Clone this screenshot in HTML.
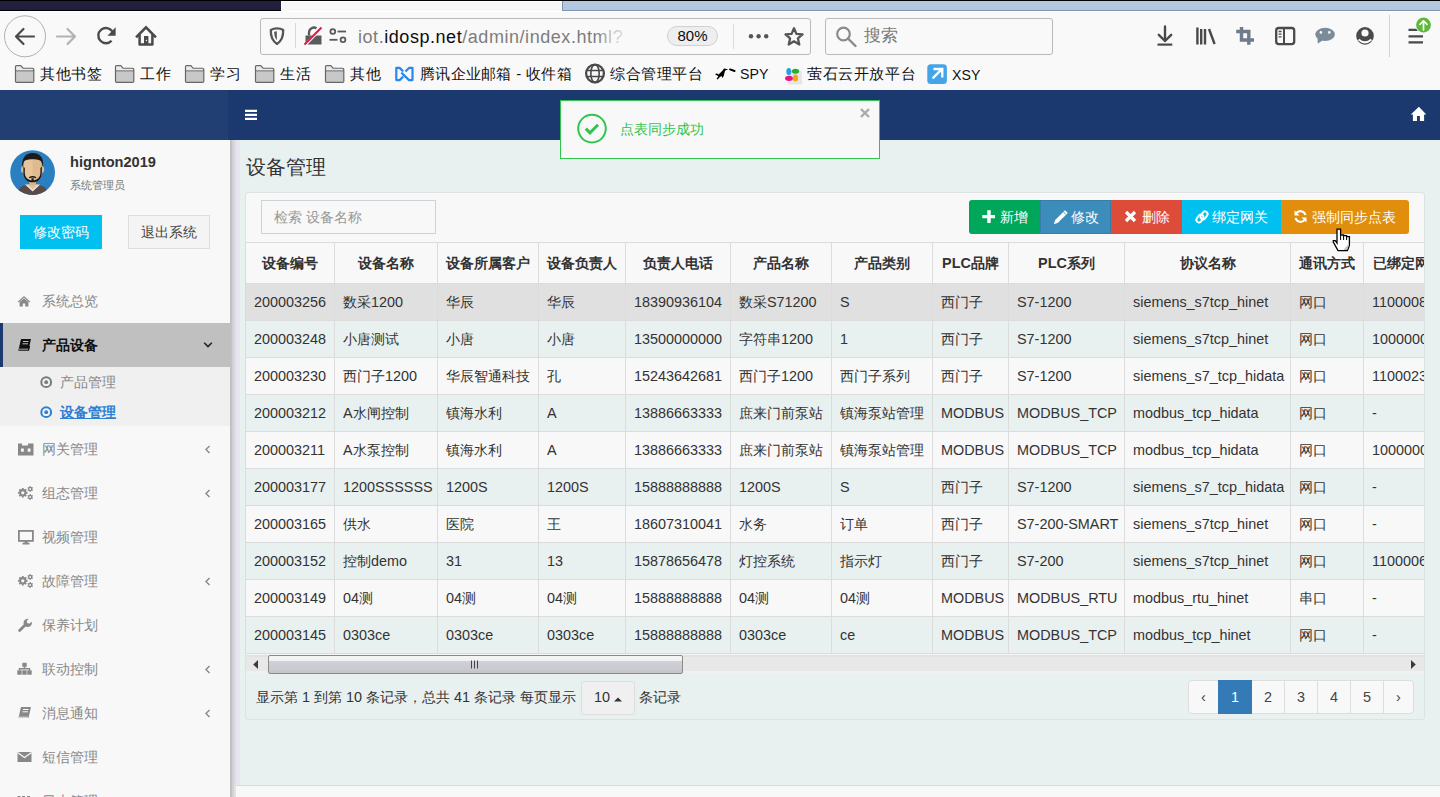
<!DOCTYPE html>
<html><head><meta charset="utf-8">
<style>
*{box-sizing:border-box;margin:0;padding:0}
html,body{width:1440px;height:797px;overflow:hidden;background:#f9f9f9;font-family:"Liberation Sans",sans-serif;color:#333}
.abs{position:absolute}
svg{display:block}
/* top strip */
#strip{left:0;top:0;width:1440px;height:11px;background:#000}
#tab1{left:0;top:1px;width:281px;height:9px;background:#201f40}
#tab2{left:281px;top:1px;width:281px;height:10px;background:#f7f7f7;border-top:1px solid #fff;border-left:1px solid #fff}
#tab3{left:562px;top:1px;width:878px;height:10px;background:#b3c8e0;border-left:1px solid #7f93ab;border-bottom:1px solid #7f93ab}
#nav{left:0;top:11px;width:1440px;height:79px;background:#f9f9f9;border-top:1px solid #fff}
#urlbar{left:260px;top:18px;width:551px;height:37px;border:1px solid #b9b9b9;border-radius:3px;background:#f9f9f9}
#search{left:825px;top:18px;width:228px;height:37px;border:1px solid #b9b9b9;border-radius:3px;background:#f9f9f9}
.bm{position:absolute;top:64px;font-size:15px;letter-spacing:0.6px;color:#111;white-space:nowrap;line-height:20px}
/* app */
#hdr{left:0;top:90px;width:1440px;height:50px;background:#1b396e}
#logo{left:0;top:90px;width:228px;height:50px;background:#223f73}
#side{left:0;top:140px;width:230px;height:657px;background:#f8f8f8}
#shadow{left:230px;top:140px;width:10px;height:645px;background:linear-gradient(90deg,#bdbdbd 0,#c6c6c6 2px,#d2d2d6 2px,#d2d2d6 4px,#dcdce4 4px,#dcdce4 6px,#e4e4ee 6px,#e6e8ee 10px)}
#shadow2{left:230px;top:785px;width:6px;height:12px;background:linear-gradient(90deg,#bdbdbd 0,#c6c6c6 2px,#d0d0d0 2px,#d4d4d4 4px,#e0e0e0 4px,#e4e4e4 6px)}
#content{left:240px;top:140px;width:1200px;height:645px;background:#e8f0f0}
#footer{left:236px;top:785px;width:1204px;height:12px;background:#f8f8f8;border-top:1px solid #d6dadd}
.menu{position:absolute;left:0;width:230px;height:44px;font-size:14.4px;color:#888;line-height:44px}
.menu .t{position:absolute;left:42px;top:0}
.menu .ic{position:absolute;left:17px;top:15px}
.menu .ch{position:absolute;left:203px;top:17px}
#panel{left:245px;top:192px;width:1180px;height:528px;background:transparent;border:1px solid #dde3e3;border-radius:3px}
#panelTop{left:246px;top:193px;width:1178px;height:49px;background:#f8f8f8;border-radius:3px 3px 0 0}
table{border-collapse:collapse;font-size:14.4px;white-space:nowrap;table-layout:fixed;width:1206px}
td,th{border:1px solid #dcdcdc;padding:0 8px;height:37px;text-align:left;font-weight:normal;color:#333}
th{height:41px;font-weight:bold;text-align:center;background:#f8f8f8}
tbody tr:nth-child(odd){background:#f8f8f8}
tbody tr:nth-child(even){background:#e8f0f0}
tbody tr.hov{background:#e0e0e0}
.btn{position:absolute;top:200px;height:34px;color:#fff;font-size:14.4px;line-height:34px;white-space:nowrap}
.pg{position:absolute;top:680px;height:34px;border:1px solid #ddd;font-size:14.4px;line-height:32px;text-align:center;color:#444;background:#f8f8f8;vertical-align:top}
.pg.act{background:#337ab7;border-color:#337ab7;color:#fff;z-index:2}
</style></head><body>
<div id="strip" class="abs"></div>
<div id="tab1" class="abs"></div>
<div id="tab2" class="abs"></div>
<div id="tab3" class="abs"></div>
<div id="nav" class="abs"></div>
<div id="urlbar" class="abs"></div>
<div id="search" class="abs"></div>

<!-- nav toolbar icons -->
<svg class="abs" style="left:0;top:11px" width="180" height="50" viewBox="0 11 180 50">
<circle cx="25" cy="36.3" r="20.5" fill="none" stroke="#a8a8a8" stroke-width="0.9"/>
<path d="M16 36.5H34 M23.5 29L16 36.5L23.5 44" fill="none" stroke="#4a4a4a" stroke-width="2.2" stroke-linecap="round" stroke-linejoin="round"/>
<path d="M57 36.5H75 M67.5 29L75 36.5L67.5 44" fill="none" stroke="#b2b2b2" stroke-width="2.2" stroke-linecap="round" stroke-linejoin="round"/>
<path d="M112.3 31.4A7.6 7.6 0 1 0 111.6 40.7" fill="none" stroke="#4a4a4a" stroke-width="2.4"/>
<path d="M115.6 27.3V35.7H107.5Z" fill="#4a4a4a"/>
<path d="M137 36.5L146 27.3L155 36.5" fill="none" stroke="#4a4a4a" stroke-width="2.6" stroke-linecap="square" stroke-linejoin="miter"/>
<path d="M139.6 34.5V44.6H152.4V34.5" fill="none" stroke="#4a4a4a" stroke-width="2.5" stroke-linejoin="round"/>
<rect x="144" y="36" width="4.4" height="9" fill="#4a4a4a"/>
<circle cx="146.4" cy="40.5" r="0.7" fill="#f2f2f2"/>
</svg>
<!-- url bar contents -->
<svg class="abs" style="left:262px;top:20px" width="100" height="34" viewBox="262 20 100 34">
<path d="M277 28.4C274.2 28.4 272.2 29.1 270.8 29.9C270.6 36.2 272 40.8 277 43.9C282 40.8 283.4 36.2 283.2 29.9C281.8 29.1 279.8 28.4 277 28.4Z" fill="none" stroke="#555" stroke-width="2.3" stroke-linejoin="round"/>
<path d="M274.2 31.8Q274.2 37.5 276.8 40.2V31.3Z" fill="#555"/>
<line x1="295.5" y1="23" x2="295.5" y2="48" stroke="#d8d8d8" stroke-width="1"/>
<path d="M309 35.5V32.5A5 5 0 0 1 316.5 28.2" fill="none" stroke="#5a5a5a" stroke-width="2.3"/>
<path d="M305.5 35.5H321.5V44.5H305.5Z" fill="#5a5a5a"/>
<path d="M305.5 44.5L321.5 28" stroke="#f9f9f9" stroke-width="3.2"/>
<path d="M304.5 44.5L321.5 27.5" stroke="#ee1133" stroke-width="2"/>
<circle cx="332.8" cy="31.5" r="2.4" fill="none" stroke="#5a5a5a" stroke-width="1.8"/>
<line x1="337.5" y1="31.5" x2="346" y2="31.5" stroke="#5a5a5a" stroke-width="1.8"/>
<line x1="329.5" y1="39.8" x2="337.5" y2="39.8" stroke="#5a5a5a" stroke-width="1.8"/>
<circle cx="343" cy="39.8" r="2.4" fill="none" stroke="#5a5a5a" stroke-width="1.8"/>
</svg>
<div class="abs" style="left:358px;top:26px;font-size:18px;line-height:22px;color:#7d7d7d;white-space:nowrap;letter-spacing:0.55px">iot.<span style="color:#0c0c0d">idosp.net</span>/admin/index.html?</div>
<div class="abs" style="left:598px;top:24px;width:30px;height:26px;background:linear-gradient(90deg,rgba(249,249,249,0) 0,rgba(249,249,249,0.55) 40%,rgba(249,249,249,0.85) 100%)"></div>
<div class="abs" style="left:667px;top:26px;width:51px;height:20px;border:1px solid #d0d0d0;border-radius:10px;background:#eeeeee;font-size:15px;line-height:18px;text-align:center;color:#0c0c0d">80%</div>
<div class="abs" style="left:733px;top:24px;width:1px;height:25px;background:#dcdcdc"></div>
<svg class="abs" style="left:745px;top:26px" width="64" height="22" viewBox="745 26 64 22">
<circle cx="751" cy="36.3" r="2.2" fill="#555"/><circle cx="758.6" cy="36.3" r="2.2" fill="#555"/><circle cx="766.2" cy="36.3" r="2.2" fill="#555"/>
<path d="M794.00 28.20 L796.41 33.88 L802.56 34.42 L797.90 38.47 L799.29 44.48 L794.00 41.30 L788.71 44.48 L790.10 38.47 L785.44 34.42 L791.59 33.88Z" fill="none" stroke="#555" stroke-width="2.3" stroke-linejoin="round"/>
</svg>
<svg class="abs" style="left:834px;top:24px" width="26" height="26" viewBox="834 24 26 26">
<circle cx="843.5" cy="34" r="6.3" fill="none" stroke="#8a8a8a" stroke-width="2.2"/>
<line x1="848" y1="38.5" x2="855.5" y2="46" stroke="#8a8a8a" stroke-width="2.4" stroke-linecap="round"/>
</svg>
<div class="abs" style="left:864px;top:25px;font-size:17px;line-height:22px;color:#7a7a7a">搜索</div>
<!-- right toolbar icons -->
<svg class="abs" style="left:1150px;top:12px" width="290" height="48" viewBox="1150 12 290 48">
<path d="M1165 26.5V41 M1158.8 34.8L1165 41L1171.2 34.8" fill="none" stroke="#4a4a4a" stroke-width="2.4" stroke-linecap="round" stroke-linejoin="round"/>
<line x1="1157.5" y1="44.6" x2="1172.3" y2="44.6" stroke="#4a4a4a" stroke-width="2.2"/>
<path d="M1197.4 27.5V44.5 M1201.2 29V44.5 M1205 29V44.5 M1209 29L1214.6 44" fill="none" stroke="#4a4a4a" stroke-width="2.4"/>
<path d="M1241.5 27V40H1254 M1236.2 31.5H1248.8V44.8" fill="none" stroke="#6d7b8a" stroke-width="3.4"/>
<rect x="1276.2" y="28" width="18" height="16.2" rx="2.6" fill="none" stroke="#4a4a4a" stroke-width="2.3"/>
<line x1="1284" y1="28" x2="1284" y2="44" stroke="#4a4a4a" stroke-width="2"/>
<path d="M1278.6 31.5H1281.6 M1278.6 34.2H1281.6 M1278.6 36.9H1281.6" stroke="#4a4a4a" stroke-width="1.3"/>
<ellipse cx="1325.1" cy="34.3" rx="9.8" ry="6.6" fill="#7b8b99"/>
<path d="M1317.5 38L1317.8 43.8L1323 40Z" fill="#7b8b99"/>
<circle cx="1320.9" cy="32.4" r="1.3" fill="#f9f9f9"/><circle cx="1329.3" cy="32.4" r="1.3" fill="#f9f9f9"/>
<circle cx="1365" cy="35.9" r="8.8" fill="#4a4a4a"/>
<circle cx="1365" cy="33" r="3.6" fill="#f9f9f9"/>
<path d="M1358.6 39.6Q1365 45.2 1371.4 39.6" fill="none" stroke="#f9f9f9" stroke-width="2"/>
<line x1="1389.5" y1="15" x2="1389.5" y2="57" stroke="#d4d4d4" stroke-width="1"/>
<path d="M1408.5 29.8H1423 M1408.5 36.3H1423 M1408.5 42.3H1423" stroke="#4a4a4a" stroke-width="2.2"/>
<circle cx="1423.5" cy="25" r="8.3" fill="#f9f9f9"/><circle cx="1423.5" cy="25" r="7.4" fill="#5cb93a"/>
<path d="M1423.5 29.8V20.8 M1420 24.3L1423.5 20.8L1427 24.3" fill="none" stroke="#fff" stroke-width="1.7" stroke-linecap="round" stroke-linejoin="round"/>
</svg>


<!-- bookmarks -->
<svg class="abs" style="left:14px;top:65px" width="21" height="18" viewBox="0 0 21 18"><path d="M1.5 1.8Q1.5 0.6 2.7 0.6H6.8L9.2 3.4H18.6Q19.8 3.4 19.8 4.6V16.2Q19.8 17.4 18.6 17.4H2.7Q1.5 17.4 1.5 16.2Z" fill="#c8c8c8" stroke="#666" stroke-width="1.2"/><path d="M1.5 5.8H19.8" stroke="#6a6a6a" stroke-width="1.1"/><path d="M2.2 1.4H6.5L8.5 3.8H18.8V5.2H2.2Z" fill="#eaeaea"/></svg><div class="bm" style="left:40px">其他书签</div>
<svg class="abs" style="left:114px;top:65px" width="21" height="18" viewBox="0 0 21 18"><path d="M1.5 1.8Q1.5 0.6 2.7 0.6H6.8L9.2 3.4H18.6Q19.8 3.4 19.8 4.6V16.2Q19.8 17.4 18.6 17.4H2.7Q1.5 17.4 1.5 16.2Z" fill="#c8c8c8" stroke="#666" stroke-width="1.2"/><path d="M1.5 5.8H19.8" stroke="#6a6a6a" stroke-width="1.1"/><path d="M2.2 1.4H6.5L8.5 3.8H18.8V5.2H2.2Z" fill="#eaeaea"/></svg><div class="bm" style="left:140px">工作</div>
<svg class="abs" style="left:184px;top:65px" width="21" height="18" viewBox="0 0 21 18"><path d="M1.5 1.8Q1.5 0.6 2.7 0.6H6.8L9.2 3.4H18.6Q19.8 3.4 19.8 4.6V16.2Q19.8 17.4 18.6 17.4H2.7Q1.5 17.4 1.5 16.2Z" fill="#c8c8c8" stroke="#666" stroke-width="1.2"/><path d="M1.5 5.8H19.8" stroke="#6a6a6a" stroke-width="1.1"/><path d="M2.2 1.4H6.5L8.5 3.8H18.8V5.2H2.2Z" fill="#eaeaea"/></svg><div class="bm" style="left:210px">学习</div>
<svg class="abs" style="left:254px;top:65px" width="21" height="18" viewBox="0 0 21 18"><path d="M1.5 1.8Q1.5 0.6 2.7 0.6H6.8L9.2 3.4H18.6Q19.8 3.4 19.8 4.6V16.2Q19.8 17.4 18.6 17.4H2.7Q1.5 17.4 1.5 16.2Z" fill="#c8c8c8" stroke="#666" stroke-width="1.2"/><path d="M1.5 5.8H19.8" stroke="#6a6a6a" stroke-width="1.1"/><path d="M2.2 1.4H6.5L8.5 3.8H18.8V5.2H2.2Z" fill="#eaeaea"/></svg><div class="bm" style="left:280px">生活</div>
<svg class="abs" style="left:324px;top:65px" width="21" height="18" viewBox="0 0 21 18"><path d="M1.5 1.8Q1.5 0.6 2.7 0.6H6.8L9.2 3.4H18.6Q19.8 3.4 19.8 4.6V16.2Q19.8 17.4 18.6 17.4H2.7Q1.5 17.4 1.5 16.2Z" fill="#c8c8c8" stroke="#666" stroke-width="1.2"/><path d="M1.5 5.8H19.8" stroke="#6a6a6a" stroke-width="1.1"/><path d="M2.2 1.4H6.5L8.5 3.8H18.8V5.2H2.2Z" fill="#eaeaea"/></svg><div class="bm" style="left:350px">其他</div>
<svg class="abs" style="left:394px;top:65px" width="21" height="18" viewBox="0 0 21 18"><path d="M9.2 6.4L5.6 2.9H2.3V15.1H5.6L9.2 11.6" fill="none" stroke="#2b87f0" stroke-width="2.2" stroke-linejoin="round"/><path d="M11.4 6.6L15 2.9H18.5V15.1H15L7.4 7.6" fill="none" stroke="#2b87f0" stroke-width="2.2" stroke-linejoin="round"/></svg>
<div class="bm" style="left:420px;letter-spacing:0.3px">腾讯企业邮箱 - 收件箱</div>
<svg class="abs" style="left:584px;top:63px" width="22" height="22" viewBox="0 0 22 22"><circle cx="11" cy="10.5" r="8.9" fill="none" stroke="#4a4a4a" stroke-width="2.3"/><ellipse cx="11" cy="10.5" rx="4.2" ry="8.9" fill="none" stroke="#4a4a4a" stroke-width="1.6"/><path d="M2.5 7.5H19.5 M2.5 13.5H19.5" stroke="#4a4a4a" stroke-width="1.5"/></svg>
<div class="bm" style="left:610px">综合管理平台</div>
<svg class="abs" style="left:714px;top:66px" width="22" height="16" viewBox="0 0 22 16"><path d="M1 8.2Q2.6 6.8 4.6 8.6L8.6 4.5L10 2.6L14.2 3.2L11 4.8L9.8 9.8L8.6 12L7.4 10L5.6 11.2L3.6 13.5L2.6 12.8L4.4 10.2Z" fill="#000"/><path d="M16 3.4L20.6 5" stroke="#000" stroke-width="1.9" stroke-linecap="round"/></svg>
<div class="bm" style="left:740px;font-size:14.2px;letter-spacing:0">SPY</div>
<svg class="abs" style="left:784px;top:65px" width="20" height="20" viewBox="0 0 20 20"><rect x="4" y="6" width="14" height="13.5" fill="#e6e6ea"/><ellipse cx="4.8" cy="6.5" rx="2.5" ry="3.6" fill="#1ea0ee"/><ellipse cx="11.5" cy="6.3" rx="3.6" ry="2.5" fill="#2eaa2e"/><ellipse cx="5" cy="13.3" rx="3.9" ry="2.6" fill="#e8157e"/><ellipse cx="11.5" cy="13" rx="2.6" ry="3.6" fill="#f3a614"/></svg>
<div class="bm" style="left:807px">萤石云开放平台</div>
<svg class="abs" style="left:927px;top:64px" width="20" height="20" viewBox="0 0 20 20"><rect x="0.3" y="0.3" width="19.6" height="19.6" rx="3.5" fill="#45a4e8"/><path d="M5.6 14.4L14.6 5.4 M6.5 5H15.3V13.6" fill="none" stroke="#fff" stroke-width="2.3"/></svg>
<div class="bm" style="left:952px;top:64.5px;font-size:14.2px;letter-spacing:0">XSY</div>
<div id="hdr" class="abs"></div>
<div id="logo" class="abs"></div>
<div id="side" class="abs"></div>
<div id="shadow" class="abs"></div><div id="shadow2" class="abs"></div>
<div id="content" class="abs"></div>
<div id="footer" class="abs"></div>


<!-- header -->
<svg class="abs" style="left:244px;top:109px" width="14" height="12" viewBox="0 0 14 12"><path d="M1 1.9H13 M1 5.9H13 M1 9.9H13" stroke="#fff" stroke-width="2.2"/></svg>
<svg class="abs" style="left:1409px;top:105px" width="20" height="18" viewBox="0 0 20 18"><path d="M9.9 1.8L17.3 9.6H15.1V16.1H10.9V10.9H8V16.1H3.9V9.6H1.8Z" fill="#fff"/></svg>
<!-- sidebar user -->
<svg class="abs" style="left:10px;top:150px" width="46" height="46" viewBox="0 0 46 46">
<defs><clipPath id="avc"><circle cx="22.6" cy="22.6" r="22.4"/></clipPath></defs>
<circle cx="22.6" cy="22.6" r="22.4" fill="#2a7fc1"/>
<g clip-path="url(#avc)">
<path d="M6.5 46C7.5 37.5 12 34.5 22.6 34.5C33.2 34.5 37.7 37.5 38.7 46Z" fill="#5a4a48"/>
<path d="M15 34.6L22.6 41.5L30.2 34.6Z" fill="#f0e6da"/>
<path d="M17.5 34.6L22.6 39.5L27.7 34.6Z" fill="#e3c197"/>
<rect x="19.3" y="29" width="6.6" height="6" fill="#d9b48a"/>
<ellipse cx="12.9" cy="19.5" rx="1.9" ry="3.2" fill="#dcb68c"/><ellipse cx="32.3" cy="19.5" rx="1.9" ry="3.2" fill="#dcb68c"/>
<path d="M13.6 13C13.6 10 16 8.8 22.6 8.8C29.2 8.8 31.6 10 31.6 13V22.5C31.6 28.5 27.8 32 22.6 32C17.4 32 13.6 28.5 13.6 22.5Z" fill="#e6c49c"/>
<path d="M22.6 8.8C29.2 8.8 31.6 10 31.6 13V22.5C31.6 28.5 27.8 32 22.6 32Z" fill="#dfba8f"/>
<path d="M12.2 17C11.5 8 15.5 2.9 22.6 2.9C30 2.9 34 7.5 33 16.5L31.6 12.5C31 10 28 9.2 22.6 9.2C17 9.2 14.3 10 13.6 12.5Z" fill="#1f1a1a"/>
<path d="M13.4 16.5V22.5C13.4 29 17.2 32.3 22.6 32.3C28 32.3 31.8 29 31.8 22.5V16.5L30.4 18V22.5C30.4 27.2 27.5 30.3 22.6 30.3C17.7 30.3 14.8 27.2 14.8 22.5V18Z" fill="#1f1a1a"/>
<path d="M18.8 27.2Q22.6 24.8 26.4 27.2L25.6 28.3Q22.6 26.6 19.6 28.3Z" fill="#1f1a1a"/>
<path d="M21.3 28.3H23.9L23.3 32H21.9Z" fill="#1f1a1a"/>
</g></svg>
<div class="abs" style="left:70px;top:153px;font-size:14.6px;font-weight:bold;color:#333;line-height:18px">hignton2019</div>
<div class="abs" style="left:70px;top:178px;font-size:11px;color:#777;line-height:15px">系统管理员</div>
<div class="abs" style="left:20px;top:215px;width:82px;height:34px;background:#00c0ef;color:#fff;font-size:14.4px;line-height:34px;text-align:center">修改密码</div>
<div class="abs" style="left:128px;top:215px;width:82px;height:34px;background:#f4f4f4;border:1px solid #ddd;color:#444;font-size:14.4px;line-height:32px;text-align:center">退出系统</div>
<!-- menu -->
<div class="menu" style="top:279px"><svg class="ic" width="14" height="14" viewBox="0 0 14 14"><path d="M7 2L0.8 7.6L1.6 8.4L7 3.6L12.4 8.4L13.2 7.6Z" fill="#888"/><path d="M2.6 8V12.5H5.8V9.5H8.2V12.5H11.4V8L7 4.2Z" fill="#888"/></svg><span class="t">系统总览</span></div>
<div class="menu" style="top:323px;background:#c0c0c0;color:#111;font-weight:bold;border-left:3px solid #1b396e"><svg class="ic" style="left:14px" width="16" height="14" viewBox="0 0 16 14"><path d="M4 1H14L11.5 12H1.5Z" fill="#111"/><path d="M1.5 12H11.5L12.5 8" fill="none" stroke="#111" stroke-width="1.3"/><path d="M6 3.5H11.5 M5.5 5.8H11" stroke="#c0c0c0" stroke-width="1"/><path d="M1.8 11.2H11" stroke="#c0c0c0" stroke-width="0.9"/></svg><span class="t" style="left:39px">产品设备</span><svg class="ch" style="left:200px;top:18px" width="10" height="8" viewBox="0 0 10 8"><path d="M1.2 1.8L5 5.6L8.8 1.8" fill="none" stroke="#222" stroke-width="1.6"/></svg></div>
<div class="abs" style="left:0;top:367px;width:230px;height:59px;background:#f0f0f0"></div>
<svg class="abs" style="left:40px;top:375.5px" width="13" height="13" viewBox="0 0 13 13"><circle cx="6.2" cy="6.2" r="4.9" fill="none" stroke="#7a7a7a" stroke-width="2"/><circle cx="6.2" cy="6.2" r="1.9" fill="#7a7a7a"/></svg>
<div class="abs" style="left:60px;top:373px;font-size:14.4px;color:#888;line-height:18px">产品管理</div>
<svg class="abs" style="left:40px;top:405.5px" width="13" height="13" viewBox="0 0 13 13"><circle cx="6.2" cy="6.2" r="4.9" fill="none" stroke="#2d80d2" stroke-width="2"/><circle cx="6.2" cy="6.2" r="1.9" fill="#2d80d2"/></svg>
<div class="abs" style="left:60px;top:403px;font-size:14.4px;color:#2d80d2;font-weight:bold;line-height:18px;text-decoration:underline">设备管理</div>
<div class="menu" style="top:427px"><svg class="ic" width="17" height="15" viewBox="0 0 17 15"><path d="M1 1.5H5V3.5H11V1.5H16.5V13.5H1Z" fill="#888"/><rect x="4" y="6.5" width="2.8" height="3.2" fill="#f8f8f8"/><rect x="10.7" y="6.5" width="2.8" height="3.2" fill="#f8f8f8"/></svg><span class="t">网关管理</span><svg class="ch" style="left:204px;top:18px" width="7" height="9" viewBox="0 0 7 9"><path d="M5.5 1L2 4.5L5.5 8" fill="none" stroke="#888" stroke-width="1.4"/></svg></div>
<div class="menu" style="top:471px"><svg class="ic" width="17" height="15" viewBox="0 0 17 15"><circle cx="5.8" cy="6.8" r="3.7" fill="#888"/><rect x="4.8999999999999995" y="1.9999999999999996" width="1.8" height="1.5" fill="#888" transform="rotate(0.0 5.8 6.8)"/><rect x="4.8999999999999995" y="1.9999999999999996" width="1.8" height="1.5" fill="#888" transform="rotate(45.0 5.8 6.8)"/><rect x="4.8999999999999995" y="1.9999999999999996" width="1.8" height="1.5" fill="#888" transform="rotate(90.0 5.8 6.8)"/><rect x="4.8999999999999995" y="1.9999999999999996" width="1.8" height="1.5" fill="#888" transform="rotate(135.0 5.8 6.8)"/><rect x="4.8999999999999995" y="1.9999999999999996" width="1.8" height="1.5" fill="#888" transform="rotate(180.0 5.8 6.8)"/><rect x="4.8999999999999995" y="1.9999999999999996" width="1.8" height="1.5" fill="#888" transform="rotate(225.0 5.8 6.8)"/><rect x="4.8999999999999995" y="1.9999999999999996" width="1.8" height="1.5" fill="#888" transform="rotate(270.0 5.8 6.8)"/><rect x="4.8999999999999995" y="1.9999999999999996" width="1.8" height="1.5" fill="#888" transform="rotate(315.0 5.8 6.8)"/><circle cx="5.8" cy="6.8" r="1.6" fill="#f8f8f8"/><circle cx="13.2" cy="3.0" r="2.2" fill="#888"/><rect x="12.549999999999999" y="0.09999999999999976" width="1.3" height="1.1" fill="#888" transform="rotate(0.0 13.2 3.0)"/><rect x="12.549999999999999" y="0.09999999999999976" width="1.3" height="1.1" fill="#888" transform="rotate(60.0 13.2 3.0)"/><rect x="12.549999999999999" y="0.09999999999999976" width="1.3" height="1.1" fill="#888" transform="rotate(120.0 13.2 3.0)"/><rect x="12.549999999999999" y="0.09999999999999976" width="1.3" height="1.1" fill="#888" transform="rotate(180.0 13.2 3.0)"/><rect x="12.549999999999999" y="0.09999999999999976" width="1.3" height="1.1" fill="#888" transform="rotate(240.0 13.2 3.0)"/><rect x="12.549999999999999" y="0.09999999999999976" width="1.3" height="1.1" fill="#888" transform="rotate(300.0 13.2 3.0)"/><circle cx="13.2" cy="3.0" r="0.9" fill="#f8f8f8"/><circle cx="13.2" cy="11.0" r="2.2" fill="#888"/><rect x="12.549999999999999" y="8.100000000000001" width="1.3" height="1.1" fill="#888" transform="rotate(0.0 13.2 11.0)"/><rect x="12.549999999999999" y="8.100000000000001" width="1.3" height="1.1" fill="#888" transform="rotate(60.0 13.2 11.0)"/><rect x="12.549999999999999" y="8.100000000000001" width="1.3" height="1.1" fill="#888" transform="rotate(120.0 13.2 11.0)"/><rect x="12.549999999999999" y="8.100000000000001" width="1.3" height="1.1" fill="#888" transform="rotate(180.0 13.2 11.0)"/><rect x="12.549999999999999" y="8.100000000000001" width="1.3" height="1.1" fill="#888" transform="rotate(240.0 13.2 11.0)"/><rect x="12.549999999999999" y="8.100000000000001" width="1.3" height="1.1" fill="#888" transform="rotate(300.0 13.2 11.0)"/><circle cx="13.2" cy="11.0" r="0.9" fill="#f8f8f8"/></svg><span class="t">组态管理</span><svg class="ch" style="left:204px;top:18px" width="7" height="9" viewBox="0 0 7 9"><path d="M5.5 1L2 4.5L5.5 8" fill="none" stroke="#888" stroke-width="1.4"/></svg></div>
<div class="menu" style="top:515px"><svg class="ic" width="17" height="15" viewBox="0 0 17 15"><rect x="1.9" y="0.9" width="14" height="10" fill="none" stroke="#888" stroke-width="1.8"/><path d="M5.5 13.6H12.5" stroke="#888" stroke-width="1.8"/><rect x="7.5" y="11" width="3" height="2" fill="#888"/></svg><span class="t">视频管理</span></div>
<div class="menu" style="top:559px"><svg class="ic" width="17" height="15" viewBox="0 0 17 15"><circle cx="5.8" cy="6.8" r="3.7" fill="#888"/><rect x="4.8999999999999995" y="1.9999999999999996" width="1.8" height="1.5" fill="#888" transform="rotate(0.0 5.8 6.8)"/><rect x="4.8999999999999995" y="1.9999999999999996" width="1.8" height="1.5" fill="#888" transform="rotate(45.0 5.8 6.8)"/><rect x="4.8999999999999995" y="1.9999999999999996" width="1.8" height="1.5" fill="#888" transform="rotate(90.0 5.8 6.8)"/><rect x="4.8999999999999995" y="1.9999999999999996" width="1.8" height="1.5" fill="#888" transform="rotate(135.0 5.8 6.8)"/><rect x="4.8999999999999995" y="1.9999999999999996" width="1.8" height="1.5" fill="#888" transform="rotate(180.0 5.8 6.8)"/><rect x="4.8999999999999995" y="1.9999999999999996" width="1.8" height="1.5" fill="#888" transform="rotate(225.0 5.8 6.8)"/><rect x="4.8999999999999995" y="1.9999999999999996" width="1.8" height="1.5" fill="#888" transform="rotate(270.0 5.8 6.8)"/><rect x="4.8999999999999995" y="1.9999999999999996" width="1.8" height="1.5" fill="#888" transform="rotate(315.0 5.8 6.8)"/><circle cx="5.8" cy="6.8" r="1.6" fill="#f8f8f8"/><circle cx="13.2" cy="3.0" r="2.2" fill="#888"/><rect x="12.549999999999999" y="0.09999999999999976" width="1.3" height="1.1" fill="#888" transform="rotate(0.0 13.2 3.0)"/><rect x="12.549999999999999" y="0.09999999999999976" width="1.3" height="1.1" fill="#888" transform="rotate(60.0 13.2 3.0)"/><rect x="12.549999999999999" y="0.09999999999999976" width="1.3" height="1.1" fill="#888" transform="rotate(120.0 13.2 3.0)"/><rect x="12.549999999999999" y="0.09999999999999976" width="1.3" height="1.1" fill="#888" transform="rotate(180.0 13.2 3.0)"/><rect x="12.549999999999999" y="0.09999999999999976" width="1.3" height="1.1" fill="#888" transform="rotate(240.0 13.2 3.0)"/><rect x="12.549999999999999" y="0.09999999999999976" width="1.3" height="1.1" fill="#888" transform="rotate(300.0 13.2 3.0)"/><circle cx="13.2" cy="3.0" r="0.9" fill="#f8f8f8"/><circle cx="13.2" cy="11.0" r="2.2" fill="#888"/><rect x="12.549999999999999" y="8.100000000000001" width="1.3" height="1.1" fill="#888" transform="rotate(0.0 13.2 11.0)"/><rect x="12.549999999999999" y="8.100000000000001" width="1.3" height="1.1" fill="#888" transform="rotate(60.0 13.2 11.0)"/><rect x="12.549999999999999" y="8.100000000000001" width="1.3" height="1.1" fill="#888" transform="rotate(120.0 13.2 11.0)"/><rect x="12.549999999999999" y="8.100000000000001" width="1.3" height="1.1" fill="#888" transform="rotate(180.0 13.2 11.0)"/><rect x="12.549999999999999" y="8.100000000000001" width="1.3" height="1.1" fill="#888" transform="rotate(240.0 13.2 11.0)"/><rect x="12.549999999999999" y="8.100000000000001" width="1.3" height="1.1" fill="#888" transform="rotate(300.0 13.2 11.0)"/><circle cx="13.2" cy="11.0" r="0.9" fill="#f8f8f8"/></svg><span class="t">故障管理</span><svg class="ch" style="left:204px;top:18px" width="7" height="9" viewBox="0 0 7 9"><path d="M5.5 1L2 4.5L5.5 8" fill="none" stroke="#888" stroke-width="1.4"/></svg></div>
<div class="menu" style="top:603px"><svg class="ic" width="17" height="15" viewBox="0 0 17 15"><path d="M2.6 12.6L8.6 6.6" stroke="#888" stroke-width="2.8" stroke-linecap="round"/><path d="M11.8 0.8A4.2 4.2 0 1 0 14.8 3.8L12.6 5.6L10.2 5.2L9.8 2.8Z" fill="#888"/></svg><span class="t">保养计划</span></div>
<div class="menu" style="top:647px"><svg class="ic" width="17" height="15" viewBox="0 0 17 15"><rect x="5.3" y="0.8" width="4.4" height="4" fill="#888"/><path d="M7.5 4.5V7 M2.5 8.5V6.7H12.5V8.5" fill="none" stroke="#888" stroke-width="1.5"/><rect x="0.3" y="8.3" width="4.4" height="4.4" fill="#888"/><rect x="5.3" y="8.3" width="4.4" height="4.4" fill="#888"/><rect x="10.3" y="8.3" width="4.4" height="4.4" fill="#888"/></svg><span class="t">联动控制</span><svg class="ch" style="left:204px;top:18px" width="7" height="9" viewBox="0 0 7 9"><path d="M5.5 1L2 4.5L5.5 8" fill="none" stroke="#888" stroke-width="1.4"/></svg></div>
<div class="menu" style="top:691px"><svg class="ic" width="17" height="15" viewBox="0 0 17 15"><path d="M4 1H14L11.5 12H1.5Z" fill="#888"/><path d="M6 3.5H11.5 M5.5 5.8H11" stroke="#f8f8f8" stroke-width="1"/><path d="M1.8 11.2H11" stroke="#f8f8f8" stroke-width="0.9"/></svg><span class="t">消息通知</span><svg class="ch" style="left:204px;top:18px" width="7" height="9" viewBox="0 0 7 9"><path d="M5.5 1L2 4.5L5.5 8" fill="none" stroke="#888" stroke-width="1.4"/></svg></div>
<div class="menu" style="top:735px"><svg class="ic" width="17" height="15" viewBox="0 0 17 15"><path d="M0.5 2H14.5V12H0.5Z" fill="#888"/><path d="M0.5 2.5L7.5 7.5L14.5 2.5" fill="none" stroke="#f8f8f8" stroke-width="1.3"/></svg><span class="t">短信管理</span></div>
<div class="menu" style="top:779px"><svg class="ic" width="17" height="15" viewBox="0 0 17 15"><path d="M0.5 2H3.5V12H0.5Z M5 2H8V12H5Z M10 2H13V12H10Z" fill="#888"/></svg><span class="t">日志管理</span></div>
<div class="abs" style="left:246px;top:154px;font-size:20px;color:#333;line-height:26px">设备管理</div>
<div id="panel" class="abs"></div><div id="panelTop" class="abs"></div>

<!-- toolbar -->
<div class="abs" style="left:261px;top:200px;width:175px;height:34px;border:1px solid #cfd1d8;background:#f8f8f8;font-size:14.4px;color:#999;line-height:32px;padding-left:12px">检索 设备名称</div>
<div class="btn" style="left:969px;width:71px;background:#00a65a;border-radius:3px 0 0 3px"><svg class="abs" style="left:12.5px;top:10px" width="14" height="14" viewBox="0 0 14 14"><path d="M7 0.3V13 M0.3 6.6H13" stroke="#fff" stroke-width="3.4"/></svg><span class="abs" style="left:31px;top:0">新增</span></div>
<div class="btn" style="left:1040px;width:71px;background:#3c8dbc;border:1px solid #367fa9;line-height:32px"><svg class="abs" style="left:11px;top:8px" width="17" height="17" viewBox="0 0 17 17"><path d="M13 1.2L15.8 4L6 13.8L1.8 15.2L3.2 11Z" fill="#fff"/><path d="M11.4 2.8L14.2 5.6" stroke="#3c8dbc" stroke-width="0.9"/></svg><span class="abs" style="left:30px;top:0">修改</span></div>
<div class="btn" style="left:1111px;width:71px;background:#dd4b39"><svg class="abs" style="left:13px;top:10px" width="13" height="13" viewBox="0 0 13 13"><path d="M2 2L11 11 M11 2L2 11" stroke="#fff" stroke-width="3.2"/></svg><span class="abs" style="left:31px;top:0">删除</span></div>
<div class="btn" style="left:1182px;width:99px;background:#00c0ef"><svg class="abs" style="left:12px;top:8px" width="16" height="18" viewBox="0 0 16 18"><g transform="rotate(-55 8 9)"><rect x="1.3" y="5.6" width="8.4" height="5.2" rx="2.6" fill="none" stroke="#fff" stroke-width="1.9"/><rect x="6.3" y="7.2" width="8.4" height="5.2" rx="2.6" fill="none" stroke="#fff" stroke-width="1.9"/></g></svg><span class="abs" style="left:30px;top:0">绑定网关</span></div>
<div class="btn" style="left:1281px;width:128px;background:#e08e0b;border-radius:0 3px 3px 0"><svg class="abs" style="left:12px;top:9px" width="15" height="15" viewBox="0 0 15 15"><path d="M12.5 6A5.3 5.3 0 0 0 3 4.5" fill="none" stroke="#fff" stroke-width="2.1"/><path d="M1.5 1.5V6.5H6.5Z" fill="#fff"/><path d="M2.5 9A5.3 5.3 0 0 0 12 10.5" fill="none" stroke="#fff" stroke-width="2.1"/><path d="M13.5 13.5V8.5H8.5Z" fill="#fff"/></svg><span class="abs" style="left:31px;top:0">强制同步点表</span></div>
<div class="abs" id="tblwrap" style="left:245px;top:242px;width:1179px;height:412px;overflow:hidden">
<table id="tbl">
<colgroup><col style="width:89px"><col style="width:103px"><col style="width:101px"><col style="width:87px"><col style="width:105px"><col style="width:101px"><col style="width:101px"><col style="width:76px"><col style="width:116px"><col style="width:166px"><col style="width:73px"><col style="width:88px"></colgroup>
<thead><tr><th>设备编号</th><th>设备名称</th><th>设备所属客户</th><th>设备负责人</th><th>负责人电话</th><th>产品名称</th><th>产品类别</th><th>PLC品牌</th><th>PLC系列</th><th>协议名称</th><th>通讯方式</th><th>已绑定网关</th></tr></thead>
<tbody>
<tr class="hov"><td>200003256</td><td>数采1200</td><td>华辰</td><td>华辰</td><td>18390936104</td><td>数采S71200</td><td>S</td><td>西门子</td><td>S7-1200</td><td>siemens_s7tcp_hinet</td><td>网口</td><td>11000088</td></tr>
<tr><td>200003248</td><td>小唐测试</td><td>小唐</td><td>小唐</td><td>13500000000</td><td>字符串1200</td><td>1</td><td>西门子</td><td>S7-1200</td><td>siemens_s7tcp_hinet</td><td>网口</td><td>10000000</td></tr>
<tr><td>200003230</td><td>西门子1200</td><td>华辰智通科技</td><td>孔</td><td>15243642681</td><td>西门子1200</td><td>西门子系列</td><td>西门子</td><td>S7-1200</td><td>siemens_s7_tcp_hidata</td><td>网口</td><td>11000233</td></tr>
<tr><td>200003212</td><td>A水闸控制</td><td>镇海水利</td><td>A</td><td>13886663333</td><td>庶来门前泵站</td><td>镇海泵站管理</td><td>MODBUS</td><td>MODBUS_TCP</td><td>modbus_tcp_hidata</td><td>网口</td><td>-</td></tr>
<tr><td>200003211</td><td>A水泵控制</td><td>镇海水利</td><td>A</td><td>13886663333</td><td>庶来门前泵站</td><td>镇海泵站管理</td><td>MODBUS</td><td>MODBUS_TCP</td><td>modbus_tcp_hidata</td><td>网口</td><td>10000000</td></tr>
<tr><td>200003177</td><td>1200SSSSSS</td><td>1200S</td><td>1200S</td><td>15888888888</td><td>1200S</td><td>S</td><td>西门子</td><td>S7-1200</td><td>siemens_s7_tcp_hidata</td><td>网口</td><td>-</td></tr>
<tr><td>200003165</td><td>供水</td><td>医院</td><td>王</td><td>18607310041</td><td>水务</td><td>订单</td><td>西门子</td><td>S7-200-SMART</td><td>siemens_s7tcp_hinet</td><td>网口</td><td>-</td></tr>
<tr><td>200003152</td><td>控制demo</td><td>31</td><td>13</td><td>15878656478</td><td>灯控系统</td><td>指示灯</td><td>西门子</td><td>S7-200</td><td>siemens_s7tcp_hinet</td><td>网口</td><td>11000066</td></tr>
<tr><td>200003149</td><td>04测</td><td>04测</td><td>04测</td><td>15888888888</td><td>04测</td><td>04测</td><td>MODBUS</td><td>MODBUS_RTU</td><td>modbus_rtu_hinet</td><td>串口</td><td>-</td></tr>
<tr><td>200003145</td><td>0303ce</td><td>0303ce</td><td>0303ce</td><td>15888888888</td><td>0303ce</td><td>ce</td><td>MODBUS</td><td>MODBUS_TCP</td><td>modbus_tcp_hinet</td><td>网口</td><td>-</td></tr>
</tbody></table>
</div>


<!-- scrollbar -->
<div class="abs" style="left:246px;top:654px;width:1178px;height:20px;background:linear-gradient(#f4f4f4 0,#f4f4f4 1px,#e2e2e2 1px,#e2e2e2 3px,#e8e8e8 3px,#e8e8e8 17px,#f0f0f0 17px)"></div>
<svg class="abs" style="left:250px;top:658px" width="12" height="12" viewBox="0 0 12 12"><path d="M8 2V11L3.2 6.5Z" fill="#3a3a3a"/></svg>
<svg class="abs" style="left:1407px;top:658px" width="12" height="12" viewBox="0 0 12 12"><path d="M4 2V11L8.8 6.5Z" fill="#3a3a3a"/></svg>
<div class="abs" style="left:268px;top:655px;width:415px;height:19px;border:1px solid #8a8a8a;border-radius:2px;background:linear-gradient(#f6f6f6 0,#f0f0f0 30%,#d0d0d8 32%,#cacad2 75%,#c4c4c4 100%)"></div>
<svg class="abs" style="left:470px;top:660px" width="10" height="9" viewBox="0 0 10 9"><path d="M1.5 0.5V8.5 M4.5 0.5V8.5 M7.5 0.5V8.5" stroke="#444" stroke-width="1"/></svg>
<!-- footer text -->
<div class="abs" style="left:256px;top:688px;font-size:14.4px;color:#333;line-height:18px;white-space:nowrap">显示第 1 到第 10 条记录，总共 41 条记录 每页显示</div>
<div class="abs" style="left:581px;top:681px;width:54px;height:34px;background:#f0f0f0;border:1px solid #ddd;border-radius:3px;font-size:14.4px;color:#333;line-height:31px;padding-left:12px">10<svg class="abs" style="left:32px;top:15px" width="8" height="5" viewBox="0 0 8 5"><path d="M0 4.5L4 0.5L8 4.5Z" fill="#333"/></svg></div>
<div class="abs" style="left:639px;top:688px;font-size:14.4px;color:#333;line-height:18px">条记录</div>
<div class="pg" style="left:1188px;width:31px;border-radius:4px 0 0 4px">‹</div><div class="pg act" style="left:1218px;width:34px">1</div><div class="pg" style="left:1251px;width:34px;">2</div><div class="pg" style="left:1284px;width:34px;">3</div><div class="pg" style="left:1317px;width:34px;">4</div><div class="pg" style="left:1350px;width:34px;">5</div><div class="pg" style="left:1383px;width:31px;border-radius:0 4px 4px 0">›</div>
<!-- toast -->
<div class="abs" style="left:560px;top:100px;width:320px;height:59px;background:#f8f8f8;border:1px solid #31c44e"></div>
<svg class="abs" style="left:576px;top:113px" width="32" height="32" viewBox="0 0 32 32"><circle cx="16" cy="15.6" r="13.8" fill="none" stroke="#31c44e" stroke-width="2"/><path d="M9.8 15.6L14 19.8L22 11.8" fill="none" stroke="#31c44e" stroke-width="3"/></svg>
<div class="abs" style="left:620px;top:120px;font-size:14.4px;color:#31c44e;line-height:18px">点表同步成功</div>
<svg class="abs" style="left:859px;top:107px" width="12" height="12" viewBox="0 0 12 12"><path d="M2 2L10 10 M10 2L2 10" stroke="#aaa" stroke-width="2.4"/></svg>
<!-- cursor -->
<svg class="abs" style="left:1332px;top:228px" width="20" height="25" viewBox="0 0 20 25"><path d="M5 1.2H8.6V7H11.6V7.6H14.6V8.6H17.4V17.5L15.4 22.6H6L1.3 14V12.6H3.3L5 15Z" fill="#fff" stroke="#000" stroke-width="1.3" stroke-linejoin="miter"/><path d="M8.6 7V12 M11.6 7.6V12 M14.6 8.6V12" stroke="#000" stroke-width="1"/><path d="M16.8 15.5L11.5 22H15L16.8 17.5Z" fill="#c4c4c4"/></svg>
</body></html>
